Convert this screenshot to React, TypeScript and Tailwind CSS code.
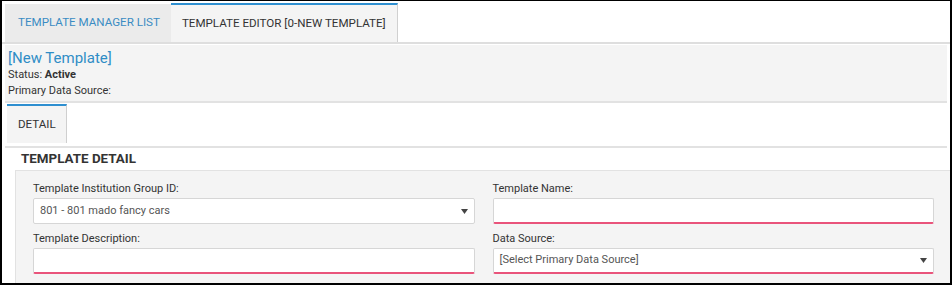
import { ReactNode } from "react";

const Caret = () => (
  <svg width="7" height="5" viewBox="0 0 7 5" className="shrink-0">
    <path d="M0 0h7L3.5 5z" fill="#444" />
  </svg>
);

const Field = ({ label, children }: { label: string; children: ReactNode }) => (
  <div className="flex flex-col">
    <label className="text-[11px] leading-[15px] text-[#333] mb-[2px]">{label}</label>
    {children}
  </div>
);

const SelectBox = ({ value, required }: { value: string; required?: boolean }) => (
  <div
    className={
      "h-[26px] bg-white border border-[#d6d6d6] rounded-[2px] flex items-center justify-between pl-[6px] pr-[6px] " +
      (required ? "border-b-2 border-b-[#e9547b]" : "")
    }
  >
    <span className="text-[11px] text-[#555]">{value}</span>
    <Caret />
  </div>
);

const TextBox = () => (
  <div className="h-[26px] bg-white border border-[#d6d6d6] border-b-2 border-b-[#e9547b] rounded-[2px]" />
);

export default function App() {
  return (
    <div
      className="w-[952px] h-[285px] bg-white border-t border-l-2 border-r-2 border-b-2 border-black overflow-hidden flex flex-col"
      style={{ fontFamily: "Roboto, 'Liberation Sans', sans-serif" }}
    >
      {/* Top tabs */}
      <div className="shrink-0 flex pt-[2px] pl-[3px] border-b-2 border-[#dedede] h-[43px]">
        <div className="bg-[#ebebeb] pl-[13px] pr-[11px] flex items-center text-[11.6px] text-[#3a8cc3] mt-[1px]">
          TEMPLATE MANAGER LIST
        </div>
        <div className="bg-[#f4f4f4] border-t-2 border-t-[#2e8fd0] border-r border-r-[#d0d0d0] px-[11px] flex items-center text-[11.6px] text-[#333]">
          TEMPLATE EDITOR [0-NEW TEMPLATE]
        </div>
      </div>

      {/* Header info */}
      <div className="shrink-0 mx-[3px] mt-[1px] bg-[#f4f4f4] h-[58px] px-[3px] pt-[3px] border-b-2 border-[#e2e2e2]">
        <div className="text-[15px] leading-[20px] text-[#2f8dc6]">[New Template]</div>
        <div className="text-[11px] leading-[14px] text-[#333]">
          Status: <span className="font-bold">Active</span>
        </div>
        <div className="text-[11px] leading-[14px] text-[#333] mt-[2px]">Primary Data Source:</div>
      </div>

      {/* Sub tabs */}
      <div className="shrink-0 mx-[3px] flex pl-[2px] pt-[1px] h-[45px] border-b-2 border-[#e2e2e2]">
        <div className="bg-[#f4f4f4] border-t-2 border-t-[#2e8fd0] border-r border-r-[#cfcfcf] w-[60px] pl-[11px] flex items-center text-[11.6px] text-[#333] mb-[3px]">
          DETAIL
        </div>
      </div>

      {/* Section heading */}
      <div className="shrink-0 pl-[19px] h-[22px] flex items-center">
        <h2 className="text-[13.4px] font-bold text-[#333] leading-none">TEMPLATE DETAIL</h2>
      </div>

      {/* Form panel */}
      <div className="flex-1 ml-[13px] bg-[#f4f4f4] border-t border-l border-[#e2e2e2] pl-[17px] pr-[16px] pt-[10px]">
        <div className="grid grid-cols-2 gap-x-[18px] gap-y-[7px]">
          <Field label="Template Institution Group ID:">
            <SelectBox value="801 - 801 mado fancy cars" />
          </Field>
          <Field label="Template Name:">
            <TextBox />
          </Field>
          <Field label="Template Description:">
            <TextBox />
          </Field>
          <Field label="Data Source:">
            <SelectBox value="[Select Primary Data Source]" required />
          </Field>
        </div>
      </div>
    </div>
  );
}
